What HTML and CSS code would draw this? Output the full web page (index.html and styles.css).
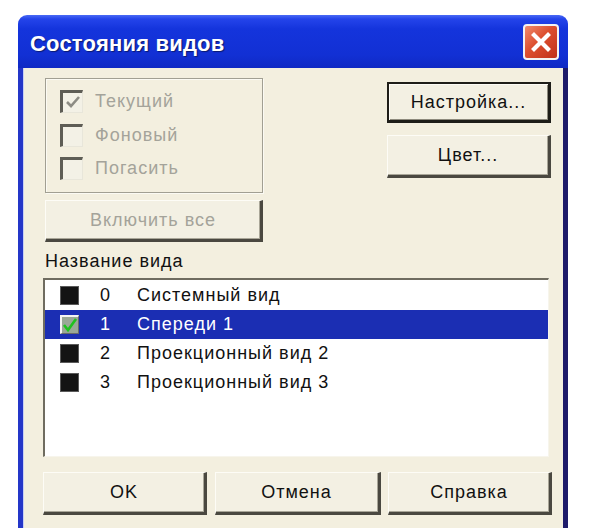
FILE: index.html
```html
<!DOCTYPE html>
<html lang="ru">
<head>
<meta charset="utf-8">
<title>Состояния видов</title>
<link rel="stylesheet" href="styles.css">
</head>
<body>
<div class="window">
  <div class="titlebar">
    <span class="title">Состояния видов</span>
    <div class="close">
      <svg width="32" height="32" viewBox="0 0 32 32"><path d="M9 9 L23 23 M23 9 L9 23" stroke="#fff" stroke-width="4.2" stroke-linecap="square"/></svg>
    </div>
  </div>
  <div class="client">
    <div class="top">
      <div class="left-col">
        <div class="group">
          <div class="chk-row"><span class="chk"><svg width="16" height="16" viewBox="0 0 16 16"><path d="M2 7 L6 11 L14 2" stroke="#8d8c84" stroke-width="2.6" fill="none"/></svg></span><span class="chk-label">Текущий</span></div>
          <div class="chk-row"><span class="chk"></span><span class="chk-label">Фоновый</span></div>
          <div class="chk-row"><span class="chk"></span><span class="chk-label">Погасить</span></div>
        </div>
        <div class="btn disabled wide">Включить все</div>
      </div>
      <div class="right-col">
        <div class="btn default">Настройка...</div>
        <div class="btn tall">Цвет...</div>
      </div>
    </div>
    <div class="label">Название вида</div>
    <div class="listbox">
      <div class="row"><span class="sq"></span><span class="num">0</span><span class="name">Системный вид</span></div>
      <div class="row selected"><span class="sq on"><svg width="16" height="16" viewBox="0 0 16 16"><path d="M2 8 L6 13 L14 2" stroke="#1fc21f" stroke-width="2.6" fill="none"/></svg></span><span class="num">1</span><span class="name">Спереди 1</span></div>
      <div class="row"><span class="sq"></span><span class="num">2</span><span class="name">Проекционный вид 2</span></div>
      <div class="row"><span class="sq"></span><span class="num">3</span><span class="name">Проекционный вид 3</span></div>
    </div>
    <div class="bottom">
      <div class="btn tall">OK</div>
      <div class="btn tall">Отмена</div>
      <div class="btn tall">Справка</div>
    </div>
  </div>
</div>
</body>
</html>
```
FILE: styles.css
```css
html, body {
  margin: 0;
  padding: 0;
  background: #ffffff;
}
body {
  font-family: "Liberation Sans", Arial, sans-serif;
  font-size: 18px;
  letter-spacing: 1px;
  color: #111;
}
.window {
  margin: 15px 0 0 18px;
  width: 550px;
  height: 513px;
  display: flex;
  flex-direction: column;
  border-radius: 9px 9px 0 0;
  overflow: hidden;
}
.titlebar {
  height: 53px;
  flex: none;
  display: flex;
  align-items: center;
  justify-content: space-between;
  padding: 0 9px 0 12px;
  background: linear-gradient(#4a6af5 0px, #2444ea 4px, #1434dc 14px, #1230d4 40px, #0f29c4 53px);
}
.title {
  font-weight: bold;
  font-size: 22px;
  letter-spacing: 0.2px;
  color: #fff;
  text-shadow: 1px 1px 1px #0a1a70;
  margin-top: 4px;
}
.close {
  width: 32px;
  height: 32px;
  border: 2px solid #f2f2f2;
  border-radius: 4px;
  background: linear-gradient(135deg, #ef8a6c 0%, #dc4e2e 45%, #c0301a 100%);
  display: flex;
  align-items: center;
  justify-content: center;
  margin-top: 1px;
}
.client {
  flex: 1;
  background: #f3efdf;
  border-left: 5px solid #2436c8;
  border-right: 5px solid #1e1b6a;
  box-shadow: inset 1px 0 0 #c8cff5;
  padding: 10px 12px 0 20px;
}
.top {
  display: flex;
  justify-content: space-between;
}
.left-col {
  margin-left: 2px;
  width: 218px;
  display: flex;
  flex-direction: column;
  gap: 7px;
}
.group {
  box-sizing: border-box;
  height: 115px;
  border: 1px solid #a19f92;
  box-shadow: inset 1px 1px 0 #fbfaf3, 1px 1px 0 #fbfaf3;
  padding: 11px 0 0 14px;
}
.chk-row {
  height: 33.5px;
  display: flex;
  align-items: flex-start;
}
.chk {
  width: 19px;
  height: 19px;
  border-top: 3px solid #5e5d55;
  border-left: 3px solid #5e5d55;
  border-right: 1px solid #e8e6da;
  border-bottom: 1px solid #e8e6da;
  background: #f3f1e6;
  display: flex;
  align-items: center;
  justify-content: center;
}
.chk-label {
  color: #a4a39a;
  margin-left: 12px;
  line-height: 22px;
}
.btn {
  box-sizing: border-box;
  height: 42px;
  display: flex;
  align-items: center;
  justify-content: center;
  background: #f3f0e3;
  border-top: 1px solid #fdfcf6;
  border-left: 1px solid #fdfcf6;
  border-right: 3px solid #4a4840;
  border-bottom: 3px solid #4a4840;
  box-shadow: inset -1px -1px 0 #a9a698;
}
.btn.disabled {
  color: #a4a39a;
}
.btn.default {
  height: 41px;
  border: 2px solid #1e1d18;
  border-right-width: 3px;
  border-bottom-width: 3px;
  box-shadow: inset 1px 1px 0 #fdfcf6, inset -1px -1px 0 #8d8a7d;
}
.btn.tall {
  height: 43px;
}
.right-col {
  width: 164px;
  padding-top: 4px;
  display: flex;
  flex-direction: column;
  gap: 12px;
}
.label {
  margin: 9px 0 0 2px;
  line-height: 20px;
  height: 20px;
}
.listbox {
  box-sizing: border-box;
  margin-top: 7px;
  width: 506px;
  height: 179px;
  background: #fff;
  border-top: 2px solid #6f6c60;
  border-left: 2px solid #6f6c60;
  border-right: 1px solid #f7f5ec;
  border-bottom: 1px solid #f7f5ec;
  padding-top: 1px;
}
.row {
  height: 29px;
  display: flex;
  align-items: center;
  padding-left: 15px;
}
.row.selected {
  background: #1b2eb3;
  color: #fff;
}
.sq {
  box-sizing: border-box;
  width: 19px;
  height: 19px;
  background: #141414;
  border: 1px solid #5a5a5a;
  display: flex;
  align-items: center;
  justify-content: center;
}
.sq.on {
  background: #9aa897;
  border-top: 2px solid #f4f4f4;
  border-left: 2px solid #f4f4f4;
  border-right: 1px solid #6a6a6a;
  border-bottom: 1px solid #6a6a6a;
}
.num {
  width: 37px;
  margin-left: 21px;
}
.bottom {
  margin-top: 15px;
  display: grid;
  grid-template-columns: 164px 166px 164px;
  justify-content: space-between;
  width: 509px;
}
```
